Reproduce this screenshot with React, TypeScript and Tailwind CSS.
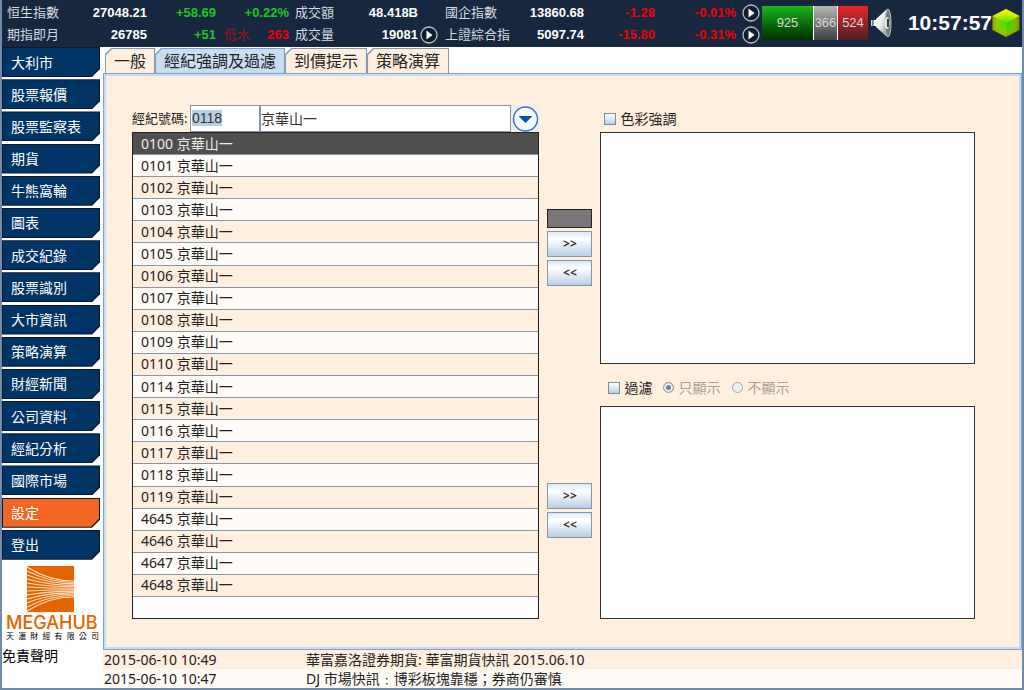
import { useEffect, useRef, useState } from 'react';

const MENU = [
  '大利市', '股票報價', '股票監察表', '期貨', '牛熊窩輪', '圖表', '成交紀錄', '股票識別',
  '大市資訊', '策略演算', '財經新聞', '公司資料', '經紀分析', '國際市場', '設定', '登出',
];

const TABS = ['一般', '經紀強調及過濾', '到價提示', '策略演算'];

const BROKERS = [
  '0100', '0101', '0102', '0103', '0104', '0105', '0106', '0107', '0108', '0109', '0110',
  '0114', '0115', '0116', '0117', '0118', '0119', '4645', '4646', '4647', '4648',
];

const NEWS = [
  { time: '2015-06-10 10:49', title: '華富嘉洛證券期貨: 華富期貨快訊 2015.06.10' },
  { time: '2015-06-10 10:47', title: 'DJ 市場快訊﹕博彩板塊靠穩；券商仍審慎' },
];

function PlayButton({ label }: { label: string }) {
  return (
    <button type="button" aria-label={label} className="block">
      <svg width="18" height="18" viewBox="0 0 18 18">
        <circle cx="9" cy="9" r="8" fill="#0f1c2e" stroke="#b9c0c9" strokeWidth="1.3" />
        <path d="M6.5 4.5 L12.5 9 L6.5 13.5 Z" fill="#fff" />
      </svg>
    </button>
  );
}

function QuoteTable() {
  const num = 'text-right font-bold';
  return (
    <table className="table-fixed w-[755px] shrink-0 text-[13px] text-[#d5dae2] whitespace-nowrap">
      <colgroup>
        <col className="w-[51px]" />
        <col className="w-[89px]" />
        <col className="w-[69px]" />
        <col className="w-[73px]" />
        <col className="w-[45px]" />
        <col className="w-[84px]" />
        <col className="w-[27px]" />
        <col className="w-[64px]" />
        <col className="w-[75px]" />
        <col className="w-[71px]" />
        <col className="w-[81px]" />
        <col className="w-[26px]" />
      </colgroup>
      <tbody>
        <tr className="h-[22px]">
          <td>恒生指數</td>
          <td className={`${num} text-white`}>27048.21</td>
          <td className={`${num} text-[#1fc81f]`}>+58.69</td>
          <td className={`${num} text-[#1fc81f]`}>+0.22%</td>
          <td className="pl-[6px]">成交額</td>
          <td className={`${num} text-white`}>48.418B</td>
          <td />
          <td>國企指數</td>
          <td className={`${num} text-white`}>13860.68</td>
          <td className={`${num} text-[#f00008]`}>-1.28</td>
          <td className={`${num} text-[#f00008]`}>-0.01%</td>
          <td className="pl-[6px]"><PlayButton label="國企指數" /></td>
        </tr>
        <tr className="h-[22px]">
          <td>期指即月</td>
          <td className={`${num} text-white`}>26785</td>
          <td className={`${num} text-[#1fc81f]`}>+51</td>
          <td className="pl-2">
            <div className="flex justify-between items-center">
              <span className="text-[#a01420]">低水</span>
              <span className="font-bold text-[#f00008]">263</span>
            </div>
          </td>
          <td className="pl-[6px]">成交量</td>
          <td className={`${num} text-white`}>19081</td>
          <td className="pl-[2px]"><PlayButton label="成交量" /></td>
          <td>上證綜合指</td>
          <td className={`${num} text-white`}>5097.74</td>
          <td className={`${num} text-[#f00008]`}>-15.80</td>
          <td className={`${num} text-[#f00008]`}>-0.31%</td>
          <td className="pl-[6px]"><PlayButton label="上證綜合指" /></td>
        </tr>
      </tbody>
    </table>
  );
}

function Speaker() {
  return (
    <svg width="22" height="32" viewBox="0 0 22 32">
      <defs>
        <linearGradient id="cone" x1="0" y1="0" x2="1" y2="1">
          <stop offset="0" stopColor="#fff" />
          <stop offset="0.5" stopColor="#eaeaea" />
          <stop offset="1" stopColor="#888" />
        </linearGradient>
      </defs>
      <rect x="0" y="13" width="1.5" height="6" fill="#ddd" />
      <rect x="2.5" y="13" width="3" height="6" fill="#fff" />
      <path d="M5 12 L16 2 Q13 16 16 30 L5 20 Z" fill="url(#cone)" />
      <ellipse cx="17" cy="16" rx="3" ry="14" fill="#747a80" stroke="#b8bcc0" strokeWidth="1" />
      <ellipse cx="16" cy="16" rx="2.6" ry="6" fill="#e4e4e4" />
      <path d="M17 12 V20" stroke="#222" strokeWidth="1.8" />
    </svg>
  );
}

function Cube() {
  return (
    <svg width="28" height="30" viewBox="0 0 28 30">
      <defs>
        <radialGradient id="cube" cx="0.5" cy="0.55" r="0.55">
          <stop offset="0" stopColor="#20e000" />
          <stop offset="0.6" stopColor="#7cc000" />
          <stop offset="1" stopColor="#7f8a00" />
        </radialGradient>
        <radialGradient id="cubeTop" cx="0.5" cy="1" r="0.8">
          <stop offset="0" stopColor="#40e400" />
          <stop offset="1" stopColor="#f2f200" />
        </radialGradient>
      </defs>
      <path d="M14 1 L27.5 8 V22 L14 29 L0.5 22 V8 Z" fill="url(#cube)" />
      <path d="M14 1 L27.5 8 L14 15 L0.5 8 Z" fill="url(#cubeTop)" />
      <path d="M0.5 8 L14 15 V29 L0.5 22 Z" fill="#e0f000" fillOpacity="0.2" />
    </svg>
  );
}

function Header() {
  return (
    <header className="flex items-start h-[47px] pl-[5px] bg-[#17273f]">
      <div className="pt-[2px]"><QuoteTable /></div>
      <div className="flex mt-[6px] h-[34px] text-[13px] text-[#d8d8d8] text-center leading-[34px]">
        <span className="w-[51px] bg-linear-to-b from-[#1cb81c] to-[#003000]">925</span>
        <span className="w-[25px] border-x border-white bg-linear-to-b from-[#b8b8b8] to-[#404040]">366</span>
        <span className="w-[30px] bg-linear-to-b from-[#ee2226] to-[#501c20]">524</span>
      </div>
      <button type="button" aria-label="聲音" className="mt-[7px] ml-[3px]"><Speaker /></button>
      <div className="flex items-center ml-auto pr-[2px] h-[46px]">
        <time className="text-[21px] font-bold text-white">10:57:57</time>
        <Cube />
      </div>
    </header>
  );
}

function Logo() {
  // curved strands that run from a wide fan on the left into a narrow band
  const strands = Array.from({ length: 12 }, (_, i) => i);
  return (
    <div className="px-1 pt-[6px]">
      <svg width="47" height="46" viewBox="0 0 47 46" className="ml-[21px]">
        <rect width="47" height="46" fill="#e56400" />
        {strands.map(i => {
          const y0 = 1 + i * 4;
          const y1 = 15 + i * 1.45;
          return (
            <path
              key={i}
              d={`M0 ${y0} Q 22 ${y1} 47 ${y1}`}
              fill="none"
              stroke="#ffe0c4"
              strokeWidth="1.1"
            />
          );
        })}
      </svg>
      <p className="mt-[2px] text-[18px] leading-[18px] font-medium text-[#e56400] font-[Inter,sans-serif]">MEGAHUB</p>
      <p className="flex justify-between text-[8px] leading-[10px] text-black">
        {[...'天滙財經有限公司'].map(c => <span key={c}>{c}</span>)}
      </p>
    </div>
  );
}

function Sidebar({ active, onSelect }: { active: string; onSelect: (m: string) => void }) {
  return (
    <aside className="w-[101px] shrink-0 bg-white">
      <nav className="flex flex-col justify-between h-[513px] w-[98px]">
        {MENU.map(m => (
          <button
            key={m}
            type="button"
            onClick={() => onSelect(m)}
            className="h-[30px] p-px bg-[#0a1a2c] [clip-path:polygon(0_0,100%_0,100%_22px,90px_100%,0_100%)]"
          >
            <span
              className={`flex items-center h-full pl-2 pt-px text-sm text-white [clip-path:polygon(0_0,100%_0,100%_20px,88px_100%,0_100%)] ${m === active ? 'bg-[#f26522]' : 'bg-[#003366]'}`}
            >
              {m}
            </span>
          </button>
        ))}
      </nav>
      <Logo />
      <a href="#disclaimer" className="block mt-1 text-sm text-black">免責聲明</a>
    </aside>
  );
}

function MoveButtons() {
  const cls = 'h-[26px] border border-[#8496aa] bg-linear-to-b from-[#dfe9f3] via-white via-30% to-[#b8cfe5] text-[12px] font-bold text-[#333] leading-none';
  return (
    <>
      <button type="button" className={cls}>&gt;&gt;</button>
      <button type="button" className={cls}>&lt;&lt;</button>
    </>
  );
}

const checkbox = 'appearance-none size-3 border border-[#7a8a99] bg-linear-to-b from-white to-[#b8cfe5] checked:bg-[#7a8a99]';
const radio = 'appearance-none size-[11px] rounded-full border border-[#9aa5b0] bg-[#eee] checked:bg-[#6f8294] checked:shadow-[inset_0_0_0_2px_#eee]';

function BrokerPanel() {
  const [code, setCode] = useState('0118');
  const [selected, setSelected] = useState('0100');
  const codeRef = useRef<HTMLInputElement>(null);

  useEffect(() => {
    codeRef.current?.select();
  }, []);

  return (
    <div className="flex-1 flex flex-col border border-[#86a0cc] bg-[#c6dcf4] p-[2px]">
      <div className="flex-1 grid grid-cols-[408fr_45px_375fr] gap-x-2 pt-[29px] pb-[28px] pl-[26px] pr-[44px] bg-[#ffefdf]">
        <div className="flex flex-col">
          <div className="flex items-center h-[27px]">
            <label htmlFor="code" className="w-[58px] shrink-0 text-[13px] whitespace-nowrap">經紀號碼:</label>
            <input
              id="code"
              ref={codeRef}
              value={code}
              onChange={e => setCode(e.target.value)}
              className="w-[70px] h-[27px] border border-[#8496aa] bg-white pl-px pb-[2px] font-[Liberation_Sans] text-[#333] outline-none selection:bg-[#b8cfe5] selection:text-[#333]"
            />
            <input
              aria-label="經紀名稱"
              defaultValue="京華山一"
              className="flex-1 min-w-0 h-[27px] pb-[2px] border border-[#8496aa] bg-white text-[#333] outline-none"
            />
            <button type="button" aria-label="選擇經紀" className="w-7 h-[27px] shrink-0 bg-[#eee]">
              <svg width="28" height="26" viewBox="0 0 28 26">
                <circle cx="14.5" cy="13" r="12" fill="#f8fafc" stroke="#2f7abf" strokeWidth="1.4" />
                <path d="M7.5 10 H21.5 L14.5 17 Z" fill="#0055a8" />
              </svg>
            </button>
          </div>
          <div className="flex-1 border border-[#222] bg-white">
            <ul role="listbox" aria-label="經紀" className="flex flex-col h-[464px]">
              {BROKERS.map((b, i) => (
                <li
                  key={b}
                  role="option"
                  aria-selected={b === selected}
                  onClick={() => setSelected(b)}
                  className={`flex-1 flex items-center pl-2 border-b border-[#8496aa] ${b === selected ? 'bg-[#4f4f4f] text-[#eee]' : i % 2 ? 'bg-[#fffcf7]' : 'bg-[#ffefdf]'}`}
                >
                  {b} 京華山一
                </li>
              ))}
            </ul>
          </div>
        </div>

        <div className="flex flex-col gap-[3px] pt-[104px]">
          <button type="button" aria-label="顏色" className="h-[19px] border border-[#222] bg-[#7b747b]" />
          <MoveButtons />
          <div className="h-[191px]" />
          <MoveButtons />
        </div>

        <div className="flex flex-col">
          <label className="flex items-center gap-1 h-[27px] pl-1">
            <input type="checkbox" className={checkbox} />
            色彩強調
          </label>
          <div className="flex-[232] border border-[#333] bg-white" />
          <div className="flex items-center h-[42px] pl-2 pt-[6px]">
            <label className="flex items-center gap-1 w-[55px]">
              <input type="checkbox" className={checkbox} />
              過濾
            </label>
            <label className="flex items-center gap-1 w-[69px] text-[#a89f98]">
              <input type="radio" name="mode" defaultChecked disabled className={radio} />
              只顯示
            </label>
            <label className="flex items-center gap-1 text-[#a89f98]">
              <input type="radio" name="mode" disabled className={radio} />
              不顯示
            </label>
          </div>
          <div className="flex-[213] border border-[#333] bg-white" />
        </div>
      </div>
    </div>
  );
}

export default function App() {
  const [page, setPage] = useState('設定');
  const [tab, setTab] = useState('經紀強調及過濾');

  return (
    <div className="flex flex-col min-h-screen border-x-2 border-b-2 border-[#6f8cad] bg-white text-sm text-[#222] font-['Liberation_Sans','Noto_Sans_CJK_TC',sans-serif]">
      <Header />
      <div className="flex-1 flex">
        <Sidebar active={page} onSelect={setPage} />
        <main className="flex-1 min-w-0 flex flex-col font-['Noto_Sans','Noto_Sans_CJK_TC',sans-serif]">
          <div role="tablist" className="flex items-end h-[26px] pl-[2px]">
            {TABS.map(t => (
              <button
                key={t}
                type="button"
                role="tab"
                aria-selected={t === tab}
                onClick={() => setTab(t)}
                className={`h-[25px] p-px pb-0 text-[16px] leading-[24px] [clip-path:polygon(6px_0,100%_0,100%_100%,0_100%,0_6px)] ${t === tab ? 'bg-[#7f9cc8]' : 'bg-[#8496aa]'}`}
              >
                <span
                  className={`block px-2 [clip-path:polygon(6px_0,100%_0,100%_100%,0_100%,0_6px)] ${t === tab ? 'bg-[#c8ddf2]' : 'bg-[#ffefdf]'}`}
                >
                  {t}
                </span>
              </button>
            ))}
          </div>
          <BrokerPanel />
          <table className="w-full">
            <tbody>
              {NEWS.map((n, i) => (
                <tr key={n.time} className={`h-[19px] leading-[19px] ${i % 2 ? 'bg-[#fffcf7]' : 'bg-[#ffefdf]'}`}>
                  <td className="w-[203px] pl-px">{n.time}</td>
                  <td>{n.title}</td>
                </tr>
              ))}
            </tbody>
          </table>
        </main>
      </div>
    </div>
  );
}
